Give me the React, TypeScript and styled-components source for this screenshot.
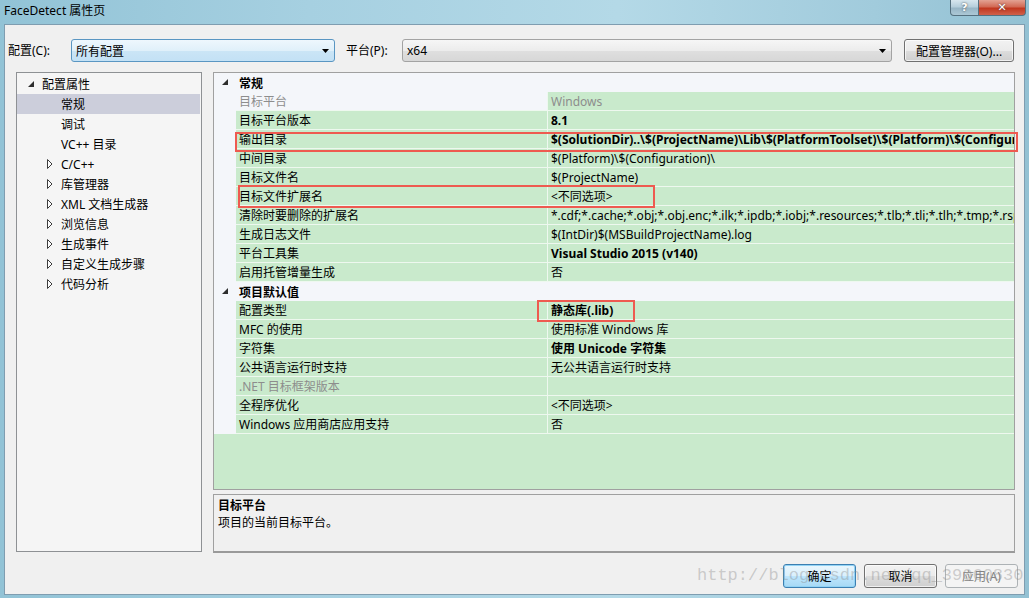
import React, { FC } from 'react';
import styled, { createGlobalStyle, css } from 'styled-components';

const GlobalStyle = createGlobalStyle`
    html, body {
        margin: 0;
        padding: 0;
        background: #a9d1e2;
    }
    body {
        font-family: "Noto Sans", "Noto Sans CJK SC", sans-serif;
        font-size: 12px;
        color: #000;
    }
`;

const Window = styled.div`
    position: relative;
    width: 1029px;
    height: 598px;
    display: flex;
    flex-direction: column;
    padding: 0 4px 3px 4px;
    box-sizing: border-box;
    background: linear-gradient(90deg, #92c3d6 0%, #a6d0e1 30%, #b4d9e7 60%, #a1cbdc 85%, #93c1d3 100%);
    overflow: hidden;
`;

const TitleBar = styled.div`
    height: 24px;
    display: flex;
    align-items: flex-start;
    margin: 0 -1px 0 -2px;
`;

const Title = styled.div`
    padding: 3px 0 0 2px;
    line-height: 16px;
    font-size: 12px;
    color: #000;
`;

const CaptionButtons = styled.div`
    margin-left: auto;
    display: flex;
`;

const CaptionButton = styled.div<{ $close?: boolean }>`
    height: 16px;
    width: ${(p) => (p.$close ? 47 : 29)}px;
    box-sizing: border-box;
    display: flex;
    align-items: center;
    justify-content: center;
    border: 1px solid #55707f;
    border-top: none;
    color: #fff;
    font-family: "DejaVu Sans", sans-serif;
    font-weight: bold;
    font-size: 11px;
    text-shadow: 0 0 2px #333;
    ${(p) =>
        p.$close
            ? css`
                  border-radius: 0 0 4px 0;
                  border-left: none;
                  background: linear-gradient(#e3a293 0%, #d26a55 45%, #c1371f 55%, #d0614b 100%);
              `
            : css`
                  border-radius: 0 0 0 4px;
                  background: linear-gradient(#d7e6ee 0%, #b6cfdc 45%, #98b6c6 55%, #acc8d6 100%);
              `}
`;

const Body = styled.div`
    flex: 1;
    display: flex;
    flex-direction: column;
    background: #f0f0f0;
    border: 1px solid #7f9db0;
`;

const TopRow = styled.div`
    display: flex;
    align-items: center;
    height: 23px;
    margin: 14px 0 10px 0;
    padding-left: 3px;
`;

const FieldLabel = styled.div<{ $width: number; $gap?: number }>`
    width: ${(p) => p.$width}px;
    flex: none;
    margin-left: ${(p) => p.$gap ?? 0}px;
    line-height: 23px;
`;

const Combo = styled.div<{ $width: number; $focused?: boolean }>`
    width: ${(p) => p.$width}px;
    flex: none;
    height: 23px;
    box-sizing: border-box;
    border-radius: 3px;
    display: flex;
    align-items: center;
    padding: 0 5px 0 4px;
    border: 1px solid ${(p) => (p.$focused ? '#5a96c2' : '#a3a3a3')};
    background: ${(p) =>
        p.$focused
            ? 'linear-gradient(#eef7fd 0%, #e0f0fa 50%, #cbe5f6 51%, #c3e1f5 100%)'
            : 'linear-gradient(#f6f6f6 0%, #ececec 50%, #dfdfdf 51%, #d7d7d7 100%)'};
`;

const ComboText = styled.span`
    flex: 1;
`;

const Button = styled.div<{ $width: number; $default?: boolean; $disabled?: boolean; $gap?: number }>`
    width: ${(p) => p.$width}px;
    flex: none;
    height: ${(p) => (p.$default !== undefined ? 24 : 23)}px;
    margin-left: ${(p) => p.$gap ?? 0}px;
    box-sizing: border-box;
    border-radius: 3px;
    display: flex;
    align-items: center;
    justify-content: center;
    border: 1px solid #707070;
    background: linear-gradient(#f2f2f2 0%, #ebebeb 50%, #dddddd 51%, #cfcfcf 100%);
    box-shadow: inset 0 0 0 1px rgba(255, 255, 255, 0.7);
    ${(p) =>
        p.$default &&
        css`
            border-color: #3c7fb1;
            background: linear-gradient(#eaf6fd 0%, #d9f0fc 50%, #bee6fd 51%, #a7d9f5 100%);
            box-shadow: inset 0 0 0 1px #92d3f5;
        `}
    ${(p) =>
        p.$disabled &&
        css`
            border-color: #adb2b5;
            background: #f4f4f4;
            color: #838383;
            box-shadow: none;
        `}
`;

const Main = styled.div`
    display: flex;
    gap: 11px;
    height: 481px;
    padding: 0 9px 0 11px;
`;

const TreePanel = styled.div`
    width: 186px;
    flex: none;
    box-sizing: border-box;
    height: 480px;
    background: #f5f5f5;
    border: 1px solid #8e9194;
    padding-top: 1px;
    white-space: nowrap;
`;

const TreeRow = styled.div<{ $level: number; $selected?: boolean }>`
    height: 20px;
    margin: 0 1px 0 0;
    display: flex;
    align-items: center;
    padding-left: ${(p) => 9 + p.$level * 19}px;
    background: ${(p) => (p.$selected ? '#cccedb' : 'transparent')};
`;

const Expander = styled.span`
    width: 16px;
    flex: none;
    height: 20px;
    display: flex;
    align-items: center;
    padding-left: 2px;
    box-sizing: border-box;
`;

const RightColumn = styled.div`
    flex: 1;
    min-width: 0;
    display: flex;
    flex-direction: column;
    gap: 4px;
`;

const GridPanel = styled.div`
    height: 418px;
    box-sizing: border-box;
    border: 1px solid #a0a0a0;
    background: #c9eacc;
    overflow: hidden;
`;

const GroupRow = styled.div`
    height: 19px;
    display: flex;
    align-items: center;
    background: #f4f6fa;
    font-weight: bold;
`;

const GroupTitle = styled.span`
    padding-left: 3px;
`;

const Gutter = styled.div`
    width: 22px;
    height: 19px;
    flex: none;
    display: flex;
    align-items: center;
    padding-left: 8px;
    box-sizing: border-box;
    background: #f4f6fa;
`;

const PropRow = styled.div`
    height: 19px;
    display: flex;
`;

const Cell = styled.div<{ $width?: number; $dim?: boolean; $bold?: boolean; $light?: boolean }>`
    ${(p) => (p.$width ? `width: ${p.$width}px; flex: none;` : 'flex: 1; min-width: 0;')}
    height: 19px;
    box-sizing: border-box;
    padding-left: 3px;
    line-height: 19px;
    white-space: nowrap;
    overflow: hidden;
    border-bottom: 1px solid #eef8ef;
    border-right: ${(p) => (p.$width ? '1px solid #eef8ef' : 'none')};
    background: ${(p) => (p.$light ? '#f4f6fa' : '#c9eacc')};
    color: ${(p) => (p.$dim ? '#8d8d8d' : '#000')};
    font-weight: ${(p) => (p.$bold ? 'bold' : 'normal')};
`;

const DescBox = styled.div`
    height: 59px;
    box-sizing: border-box;
    border: 1px solid #a0a0a0;
    border-bottom: 2px solid #9a9a9a;
    padding: 2px 4px;
    line-height: 17px;
`;

const DescTitle = styled.div`
    font-weight: bold;
`;

const Footer = styled.div`
    display: flex;
    justify-content: flex-end;
    margin-top: 11px;
    padding-right: 6px;
`;

const RedBox = styled.div`
    position: absolute;
    box-sizing: border-box;
    border: 2px solid #ee5a50;
    pointer-events: none;
`;

const Watermark = styled.div`
    position: absolute;
    left: 697px;
    top: 566px;
    font-family: "Liberation Mono", monospace;
    font-size: 17px;
    color: rgba(140, 140, 140, 0.4);
    pointer-events: none;
    white-space: nowrap;
`;

const ExpandedIcon: FC = () => (
    <svg width="7" height="7" viewBox="0 0 7 7">
        <polygon points="6,0 6,6 0,6" fill="#2d2d2d" />
    </svg>
);

const CollapsedIcon: FC = () => (
    <svg width="6" height="10" viewBox="0 0 6 10">
        <polygon points="0.5,0.5 5,5 0.5,9.5" fill="#fff" stroke="#3c3c3c" strokeWidth="1" />
    </svg>
);

const ArrowDown: FC = () => (
    <svg width="7" height="4" viewBox="0 0 7 4">
        <polygon points="0,0 7,0 3.5,4" fill="#000" />
    </svg>
);

interface TreeItem {
    label: string;
    level: number;
    expander?: 'open' | 'closed';
    selected?: boolean;
}

const treeItems: TreeItem[] = [
    { label: '配置属性', level: 0, expander: 'open' },
    { label: '常规', level: 1, selected: true },
    { label: '调试', level: 1 },
    { label: 'VC++ 目录', level: 1 },
    { label: 'C/C++', level: 1, expander: 'closed' },
    { label: '库管理器', level: 1, expander: 'closed' },
    { label: 'XML 文档生成器', level: 1, expander: 'closed' },
    { label: '浏览信息', level: 1, expander: 'closed' },
    { label: '生成事件', level: 1, expander: 'closed' },
    { label: '自定义生成步骤', level: 1, expander: 'closed' },
    { label: '代码分析', level: 1, expander: 'closed' },
];

interface Prop {
    name: string;
    value: string;
    bold?: boolean;
    dim?: boolean;
    selected?: boolean;
}

interface Group {
    title: string;
    props: Prop[];
}

const groups: Group[] = [
    {
        title: '常规',
        props: [
            { name: '目标平台', value: 'Windows', dim: true, selected: true },
            { name: '目标平台版本', value: '8.1', bold: true },
            {
                name: '输出目录',
                value: '$(SolutionDir)..\\$(ProjectName)\\Lib\\$(PlatformToolset)\\$(Platform)\\$(Configuration)\\',
                bold: true,
            },
            { name: '中间目录', value: '$(Platform)\\$(Configuration)\\' },
            { name: '目标文件名', value: '$(ProjectName)' },
            { name: '目标文件扩展名', value: '<不同选项>' },
            {
                name: '清除时要删除的扩展名',
                value: '*.cdf;*.cache;*.obj;*.obj.enc;*.ilk;*.ipdb;*.iobj;*.resources;*.tlb;*.tli;*.tlh;*.tmp;*.rsp;*.pgc;*.pgd;*.meta',
            },
            { name: '生成日志文件', value: '$(IntDir)$(MSBuildProjectName).log' },
            { name: '平台工具集', value: 'Visual Studio 2015 (v140)', bold: true },
            { name: '启用托管增量生成', value: '否' },
        ],
    },
    {
        title: '项目默认值',
        props: [
            { name: '配置类型', value: '静态库(.lib)', bold: true },
            { name: 'MFC 的使用', value: '使用标准 Windows 库' },
            { name: '字符集', value: '使用 Unicode 字符集', bold: true },
            { name: '公共语言运行时支持', value: '无公共语言运行时支持' },
            { name: '.NET 目标框架版本', value: '', dim: true },
            { name: '全程序优化', value: '<不同选项>' },
            { name: 'Windows 应用商店应用支持', value: '否' },
        ],
    },
];

const PropertyGrid: FC = () => (
    <GridPanel>
        {groups.map((g) => (
            <React.Fragment key={g.title}>
                <GroupRow>
                    <Gutter>
                        <ExpandedIcon />
                    </Gutter>
                    <GroupTitle>{g.title}</GroupTitle>
                </GroupRow>
                {g.props.map((p) => (
                    <PropRow key={p.name}>
                        <Gutter />
                        <Cell $width={312} $dim={p.dim} $light={p.selected}>
                            {p.name}
                        </Cell>
                        <Cell $dim={p.dim} $bold={p.bold}>
                            {p.value}
                        </Cell>
                    </PropRow>
                ))}
            </React.Fragment>
        ))}
    </GridPanel>
);

export default function App() {
    return (
        <>
            <GlobalStyle />
            <Window>
                <TitleBar>
                    <Title>FaceDetect 属性页</Title>
                    <CaptionButtons>
                        <CaptionButton>?</CaptionButton>
                        <CaptionButton $close>✕</CaptionButton>
                    </CaptionButtons>
                </TitleBar>
                <Body>
                    <TopRow>
                        <FieldLabel $width={63}>配置(C):</FieldLabel>
                        <Combo $width={264} $focused>
                            <ComboText>所有配置</ComboText>
                            <ArrowDown />
                        </Combo>
                        <FieldLabel $width={56} $gap={11}>
                            平台(P):
                        </FieldLabel>
                        <Combo $width={490}>
                            <ComboText>x64</ComboText>
                            <ArrowDown />
                        </Combo>
                        <Button $width={110} $gap={12}>
                            配置管理器(O)...
                        </Button>
                    </TopRow>
                    <Main>
                        <TreePanel>
                            {treeItems.map((t) => (
                                <TreeRow key={t.label} $level={t.level} $selected={t.selected}>
                                    <Expander>
                                        {t.expander === 'open' && <ExpandedIcon />}
                                        {t.expander === 'closed' && <CollapsedIcon />}
                                    </Expander>
                                    {t.label}
                                </TreeRow>
                            ))}
                        </TreePanel>
                        <RightColumn>
                            <PropertyGrid />
                            <DescBox>
                                <DescTitle>目标平台</DescTitle>
                                <div>项目的当前目标平台。</div>
                            </DescBox>
                        </RightColumn>
                    </Main>
                    <Footer>
                        <Button $width={73} $default>
                            确定
                        </Button>
                        <Button $width={73} $default={false} $gap={8}>
                            取消
                        </Button>
                        <Button $width={73} $default={false} $disabled $gap={8}>
                            应用(A)
                        </Button>
                    </Footer>
                </Body>
                <RedBox style={{ left: 235, top: 132, width: 783, height: 20 }} />
                <RedBox style={{ left: 238, top: 185, width: 417, height: 23 }} />
                <RedBox style={{ left: 537, top: 300, width: 98, height: 22 }} />
                <Watermark>http://blog.csdn.net/qq_39060830</Watermark>
            </Window>
        </>
    );
}
